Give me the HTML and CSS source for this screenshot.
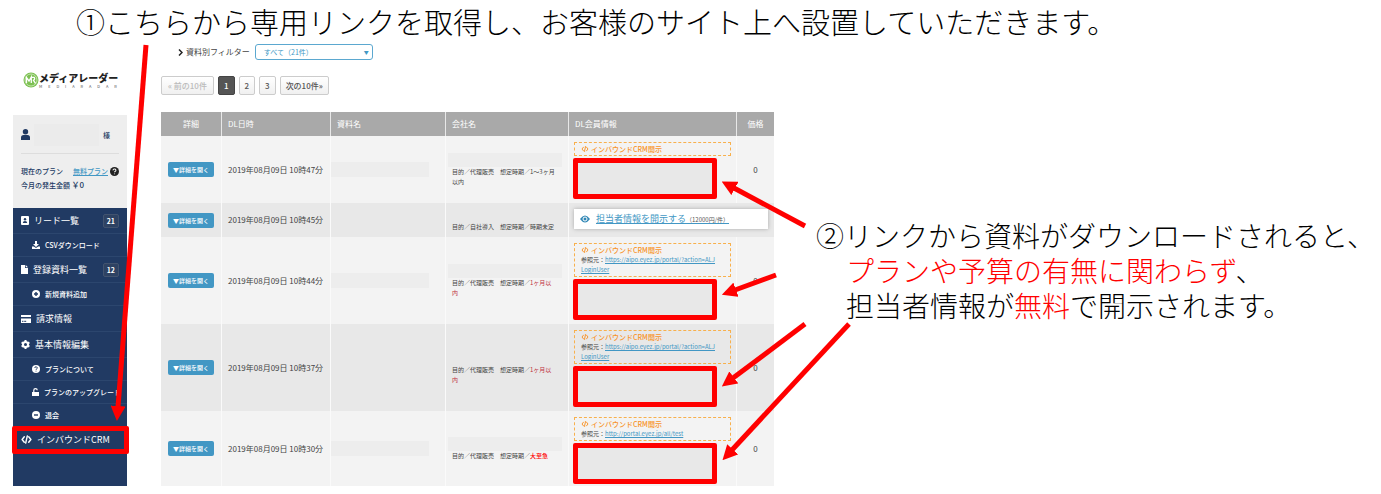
FILE: index.html
```
<!DOCTYPE html>
<html lang="ja">
<head>
    <meta charset="UTF-8">
    <title>インバウンドCRM</title>
    <link rel="stylesheet" href="styles.css">
</head>
<body>
<!-- shared icons -->
<svg class="defs" width="0" height="0">
    <symbol id="icon-code" viewBox="0 0 20 16">
        <path d="M6 3 2 8l4 5M14 3l4 5-4 5M11.500 1.500l-3 13" fill="none" stroke="currentColor" stroke-width="2.600" stroke-linecap="round" stroke-linejoin="round"/>
    </symbol>
    <symbol id="icon-help" viewBox="0 0 16 16">
        <circle cx="8" cy="8" r="8" fill="currentColor"/>
        <path class="cut" d="M5.500 6a2.500 2.300 0 1 1 3.600 2c-.8.400-1.100.7-1.100 1.500M8 11.500v1.500" fill="none" stroke-width="2"/>
    </symbol>
</svg>

<h1 class="caption">①こちらから専用リンクを取得し、お客様のサイト上へ設置していただきます。</h1>

<div class="page">
    <aside class="sidebar">
        <div class="logo">
            <svg width="16" height="16" viewBox="0 0 16 16">
                <circle cx="8" cy="8" r="7.500" fill="#7cc052"/>
                <circle cx="8" cy="8" r="6" fill="none" stroke="#d4ecc4" stroke-width=".8"/>
                <path d="M3.500 11V5.500L6 9l2.300-4v6M8.500 5.300h2.500q1.500 1.500-.5 3l2 3" fill="none" stroke="#fff" stroke-width="1.300"/>
            </svg>
            <div class="logo-text">
                <div class="logo-name">メディアレーダー</div>
                <div class="logo-sub"><span>M</span><span>E</span><span>D</span><span>I</span><span>A</span><span>R</span><span>A</span><span>D</span><span>A</span><span>R</span></div>
            </div>
        </div>

        <div class="account">
            <div class="user">
                <svg width="9" height="11" viewBox="0 0 9 11"><circle cx="4.500" cy="2.700" r="2.700" fill="currentColor"/><path d="M0 11V8.500Q0 6 2.500 6h4Q9 6 9 8.500V11z" fill="currentColor"/></svg>
                <span class="user-name"></span>
                <span>様</span>
            </div>
            <div class="plan">
                <span>現在のプラン</span>
                <a href="#">無料プラン</a>
                <svg class="help" width="9" height="9"><use href="#icon-help"/></svg>
            </div>
            <div class="fee">今月の発生金額 <span>￥0</span></div>
        </div>

        <nav class="nav">
            <a href="#" class="item">
                <svg width="8" height="9" viewBox="0 0 8 9"><rect width="8" height="9" rx="1" fill="currentColor"/><circle cx="4" cy="3.200" r="1.200" fill="#213a63"/><path d="M1.800 7q0-2 2.200-2t2.200 2z" fill="#213a63"/></svg>
                リード一覧 <span class="count">21</span>
            </a>
            <a href="#" class="item sub">
                <svg width="8" height="8" viewBox="0 0 8 8"><path d="M3 0h2v3h2L4 6 1 3h2zM0 5.500h1.800L4 7l2.200-1.500H8V8H0z" fill="currentColor"/></svg>
                CSVダウンロード
            </a>
            <a href="#" class="item">
                <svg width="7" height="9" viewBox="0 0 7 9"><path d="M0 0h4v3h3v6H0zM4.700 0 7 2.300H4.700z" fill="currentColor"/></svg>
                登録資料一覧 <span class="count">12</span>
            </a>
            <a href="#" class="item sub">
                <svg width="8" height="8" viewBox="0 0 8 8"><circle cx="4" cy="4" r="4" fill="currentColor"/><path d="M4 2v4M2 4h4" stroke="#213a63" stroke-width="1.400"/></svg>
                新規資料追加
            </a>
            <a href="#" class="item">
                <svg width="10" height="8" viewBox="0 0 10 8"><path d="M0 0h10v2H0zM0 3.500h10V8H0z" fill="currentColor"/><path d="M1 6.300h1.500M3.200 6.300h2" stroke="#213a63"/></svg>
                請求情報
            </a>
            <a href="#" class="item">
                <svg width="9" height="9" viewBox="0 0 9 9"><circle cx="4.500" cy="4.500" r="2.500" fill="none" stroke="currentColor" stroke-width="2"/><path d="M4.500 0v2M4.500 7v2M.6 2.300l1.700 1M6.700 5.700l1.700 1M.6 6.700l1.700-1M6.700 3.300l1.700-1" stroke="currentColor" stroke-width="2"/></svg>
                基本情報編集
            </a>
            <a href="#" class="item sub">
                <svg width="8" height="8"><use href="#icon-help"/></svg>
                プランについて
            </a>
            <a href="#" class="item sub">
                <svg width="7" height="8" viewBox="0 0 7 8"><path d="M0 4h7v4H0z" fill="currentColor"/><path d="M1.800 4V2.300a1.700 1.700 0 0 1 3.400 0" fill="none" stroke="currentColor" stroke-width="1.200"/></svg>
                プランのアップグレード
            </a>
            <a href="#" class="item sub">
                <svg width="8" height="8" viewBox="0 0 8 8"><circle cx="4" cy="4" r="4" fill="currentColor"/><path d="M2 4h4" stroke="#213a63" stroke-width="1.400"/></svg>
                退会
            </a>
            <a href="#" class="item marked">
                <svg width="11" height="9"><use href="#icon-code"/></svg>
                インバウンドCRM
            </a>
        </nav>
    </aside>

    <main class="content">
        <div class="filter">
            <svg width="5" height="7" viewBox="0 0 5 7"><path d="m1 .5 3 3-3 3" fill="none" stroke="#222" stroke-width="1.500"/></svg>
            <label for="filter">資料別フィルター</label>
            <div class="select-box">
                <select id="filter"><option>すべて（21件）</option></select>
            </div>
        </div>

        <div class="pager">
            <button type="button" disabled>« 前の10件</button>
            <button type="button" class="current">1</button>
            <button type="button">2</button>
            <button type="button">3</button>
            <button type="button">次の10件»</button>
        </div>

        <table class="leads">
            <colgroup>
                <col class="c-detail"><col class="c-date"><col class="c-doc"><col class="c-company"><col><col class="c-price">
            </colgroup>
            <thead>
                <tr><th>詳細</th><th>DL日時</th><th>資料名</th><th>会社名</th><th>DL会員情報</th><th>価格</th></tr>
            </thead>
            <tbody>
                <tr>
                    <td><button type="button" class="open">▼詳細を開く</button></td>
                    <td>2019年08月09日 10時47分</td>
                    <td><div class="mask"></div></td>
                    <td class="company"><div class="mask"></div>目的／代理販売　想定時期／1～3ヶ月<br>以内</td>
                    <td class="member">
                        <div class="inbound"><b><svg width="8" height="6"><use href="#icon-code"/></svg>インバウンドCRM開示</b></div>
                        <div class="redbox"></div>
                    </td>
                    <td>0</td>
                </tr>
                <tr>
                    <td><button type="button" class="open">▼詳細を開く</button></td>
                    <td>2019年08月09日 10時45分</td>
                    <td></td>
                    <td class="company"><div class="mask clear"></div>目的／自社導入　想定時期／時期未定</td>
                    <td class="member wide" colspan="2">
                        <div class="disclose">
                            <svg width="10" height="8" viewBox="0 0 10 8"><path d="M0 4q5-7 10 0-5 7-10 0z" fill="#2f86b5"/><circle cx="5" cy="4" r="2" fill="none" stroke="#fff"/></svg>
                            <a href="#">担当者情報を開示する<small>（12000円/件）</small></a>
                        </div>
                    </td>
                </tr>
                <tr>
                    <td><button type="button" class="open">▼詳細を開く</button></td>
                    <td>2019年08月09日 10時44分</td>
                    <td><div class="mask"></div></td>
                    <td class="company"><div class="mask"></div>目的／代理販売　想定時期／<em>1ヶ月以<br>内</em></td>
                    <td class="member">
                        <div class="inbound"><b><svg width="8" height="6"><use href="#icon-code"/></svg>インバウンドCRM開示</b>参照元：<a href="#">https://aipo.eyez.jp/portal/?action=ALJ<br>LoginUser</a></div>
                        <div class="redbox"></div>
                    </td>
                    <td>0</td>
                </tr>
                <tr>
                    <td><button type="button" class="open">▼詳細を開く</button></td>
                    <td>2019年08月09日 10時37分</td>
                    <td></td>
                    <td class="company"><div class="mask clear"></div>目的／代理販売　想定時期／<em>1ヶ月以<br>内</em></td>
                    <td class="member">
                        <div class="inbound"><b><svg width="8" height="6"><use href="#icon-code"/></svg>インバウンドCRM開示</b>参照元：<a href="#">https://aipo.eyez.jp/portal/?action=ALJ<br>LoginUser</a></div>
                        <div class="redbox"></div>
                    </td>
                    <td>0</td>
                </tr>
                <tr>
                    <td><button type="button" class="open">▼詳細を開く</button></td>
                    <td>2019年08月09日 10時30分</td>
                    <td><div class="mask"></div></td>
                    <td class="company"><div class="mask"></div>目的／代理販売　想定時期／<em class="urgent">大至急</em></td>
                    <td class="member">
                        <div class="inbound"><b><svg width="8" height="6"><use href="#icon-code"/></svg>インバウンドCRM開示</b>参照元：<a href="#">http://portal.eyez.jp/all/test</a></div>
                        <div class="redbox"></div>
                    </td>
                    <td>0</td>
                </tr>
            </tbody>
        </table>
    </main>

    <div class="note">
        <p>②リンクから資料がダウンロードされると、</p>
        <p class="indent"><span class="red">プランや予算の有無に関わらず</span>、</p>
        <p class="indent">担当者情報が<span class="red">無料</span>で開示されます。</p>
    </div>
</div>

<!-- arrows over the page -->
<svg class="arrows" width="860" height="494" viewBox="0 0 860 494">
    <defs>
        <marker id="head" markerUnits="userSpaceOnUse" markerWidth="15" markerHeight="15" refX="1" refY="7.500" orient="auto">
            <path d="M0 0 15 7.500 0 15z" fill="#f00"/>
        </marker>
    </defs>
    <g stroke="#f00" stroke-width="5">
        <path marker-end="url(#head)" d="M146 45 118 407"/>
        <path marker-end="url(#head)" d="M805 226 734 188"/>
        <path marker-end="url(#head)" d="M776 275 735 290"/>
        <path marker-end="url(#head)" d="M805 324 733 378"/>
        <path marker-end="url(#head)" d="M849 324 732 450"/>
    </g>
</svg>
</body>
</html>
```
FILE: styles.css
```
*{
    margin: 0;
    padding: 0;
    box-sizing: border-box;
}

body {
    position: relative;
    background: #fff;
    color: #444;
    font-family: "Noto Sans CJK JP", sans-serif;
    font-size: 8px;
    line-height: 10px;
    overflow: hidden;
}

svg {
    flex-shrink: 0;
}

.defs {
    position: absolute;
}

.caption {
    padding: 0 0 1px 76px;
    color: #000;
    font-size: 29px;
    font-weight: 300;
    line-height: 43px;
    white-space: nowrap;
}

.page {
    display: flex;
    align-items: flex-start;
    padding-left: 13px;
}

/* sidebar */
.sidebar {
    --cut: #eee;
    flex: 0 0 114px;
    color: #213a63;
}

.logo {
    display: flex;
    align-items: center;
    height: 71px;
    padding-left: 10px;
}

.logo-text {
    width: 78px;
}

.logo-name {
    color: #222;
    font-size: 10px;
    font-weight: 900;
    line-height: 12px;
    white-space: nowrap;
}

.logo-sub {
    display: flex;
    justify-content: space-between;
    color: #555;
    font-size: 4px;
    line-height: 4px;
}

.account {
    height: 93px;
    padding: 8px 8px 0;
    background: #eee;
    font-size: 7px;
    font-weight: 500;
}

.user {
    display: flex;
    align-items: center;
    gap: 4px;
    height: 31px;
    margin-bottom: 10px;
    padding-bottom: 7px;
    border-bottom: 1px solid #ddd;
}

.user-name {
    width: 65px;
    height: 22px;
    background: #ebebeb;
}

.plan {
    display: flex;
    align-items: center;
    justify-content: space-between;
    height: 14px;
    white-space: nowrap;
}

.plan span {
    margin-right: 8px;
}

.help {
    color: #222;
}

.fee {
    line-height: 14px;
    white-space: nowrap;
}

.fee span {
    font-size: 8px;
}

.cut {
    stroke: var(--cut);
}

.nav {
    --cut: #213a63;
    padding-bottom: 33px;
    background: #213a63;
}

.item {
    position: relative;
    display: flex;
    align-items: center;
    gap: 5px;
    height: 26px;
    padding: 0 8px;
    border-bottom: 1px solid #2c466e;
    color: #fff;
    font-size: 9px;
    text-decoration: none;
    white-space: nowrap;
}

.item.sub {
    height: 23px;
    padding: 0 0 0 19px;
    font-size: 7px;
    font-weight: 500;
    overflow: hidden;
}

.count {
    margin-left: auto;
    padding: 0 3px;
    border: 1px solid #42536f;
    border-radius: 2px;
    background: #2e4263;
    font-size: 7px;
    font-weight: 700;
    line-height: 12px;
}

.marked::after {
    content: "";
    position: absolute;
    inset: -1px -2px -2px -1px;
    border: 5px solid #f00;
    border-radius: 2px;
}

/* content */
.content {
    flex: 0 1 613px;
    margin-left: 34px;
}

.filter {
    display: flex;
    align-items: center;
    gap: 3px;
    height: 16px;
    padding-left: 17px;
}

.select-box {
    position: relative;
    width: 118px;
    margin-left: 2px;
}

.select-box::after {
    content: "▼";
    position: absolute;
    right: 4px;
    top: 3px;
    color: #4297c4;
    font-size: 5px;
    pointer-events: none;
}

.select-box select {
    display: block;
    width: 100%;
    height: 16px;
    padding: 0 8px;
    border: 1px solid #5ba8d0;
    border-radius: 3px;
    background: #fff;
    color: #4297c4;
    font-family: inherit;
    font-size: 7px;
    appearance: none;
}

.pager {
    display: flex;
    gap: 4px;
    padding: 16px 0 17px;
}

.pager button {
    height: 19px;
    padding: 0 5px;
    border: 1px solid #ccc;
    border-radius: 2px;
    background: linear-gradient(#fff, #f0f0f0);
    color: #555;
    font-family: inherit;
    font-size: 8px;
    font-weight: 500;
}

.pager button:disabled {
    padding: 0 6px;
    color: #bbb;
}

.pager .current {
    border-color: #444;
    background: #555;
    color: #fff;
}

/* lead table */
.leads {
    width: 100%;
    table-layout: fixed;
    border-spacing: 0;
}

.c-detail {
    width: 61px;
}

.c-date {
    width: 109px;
}

.c-doc {
    width: 115px;
}

.c-company {
    width: 123px;
}

.c-price {
    width: 37px;
}

.leads th {
    height: 24px;
    padding: 0 6px;
    border-right: 1px solid #e8e8e8;
    background: #a9a9a9;
    color: #fff;
    font-weight: 400;
    text-align: left;
}

.leads td {
    height: 34px;
    padding: 0 6px;
    border-right: 1px solid #fafafa;
    background: #f3f3f3;
    white-space: nowrap;
}

.leads tbody tr:nth-child(even) td {
    background: #e8e8e8;
}

.leads th:first-child,
.leads td:first-child,
.leads th:last-child,
.leads td:last-child {
    text-align: center;
}

.leads th:last-child,
.leads td:last-child {
    border-right: none;
}

.open {
    width: 46px;
    height: 15px;
    border: none;
    border-radius: 2px;
    background: #4297c4;
    color: #fff;
    font-family: inherit;
    font-size: 6px;
    font-weight: 500;
}

.mask {
    width: 98px;
    height: 15px;
    margin-left: -6px;
    background: #ededed;
}

.leads .company {
    font-size: 6px;
}

.company .mask {
    width: 114px;
    height: 14px;
    margin-left: -4px;
}

.leads .mask.clear {
    background: none;
}

.company em {
    color: #c03040;
    font-style: normal;
}

.company .urgent {
    color: #f00;
    font-weight: 500;
}

.leads .member {
    padding: 6px 6px 4px 5px;
    vertical-align: top;
}

.leads tr:last-child .member {
    padding-bottom: 2px;
}

.inbound {
    width: 157px;
    padding: 1px 6px;
    border: 1px dashed #f8b04c;
    font-size: 6px;
}

.inbound b {
    display: flex;
    align-items: center;
    gap: 2px;
    color: #f8942a;
    font-size: 7px;
    font-weight: 500;
}

.member a,
.plan a {
    color: #4297c4;
}

.redbox {
    width: 144px;
    height: 41px;
    margin: 2px 0 0 -1px;
    border: 5px solid #f00;
    border-radius: 2px;
    background: #e8e8e8;
}

.leads .member.wide {
    padding-bottom: 0;
    text-align: left;
}

.disclose {
    display: flex;
    align-items: center;
    gap: 6px;
    height: 20px;
    padding-left: 6px;
    background: #fff;
    box-shadow: 0 0 4px #aaa;
    font-size: 9px;
}

.disclose small {
    color: #555;
    font-size: 6px;
}

/* right hand note */
.note {
    flex: 1;
    min-width: 0;
    margin-left: 42px;
    padding-top: 174px;
    color: #000;
    font-size: 28px;
    font-weight: 300;
    line-height: 35px;
    white-space: nowrap;
}

.note .indent {
    padding-left: 30px;
}

.red {
    color: #f00;
}

.arrows {
    position: absolute;
    top: 0;
    left: 0;
    pointer-events: none;
}
```
